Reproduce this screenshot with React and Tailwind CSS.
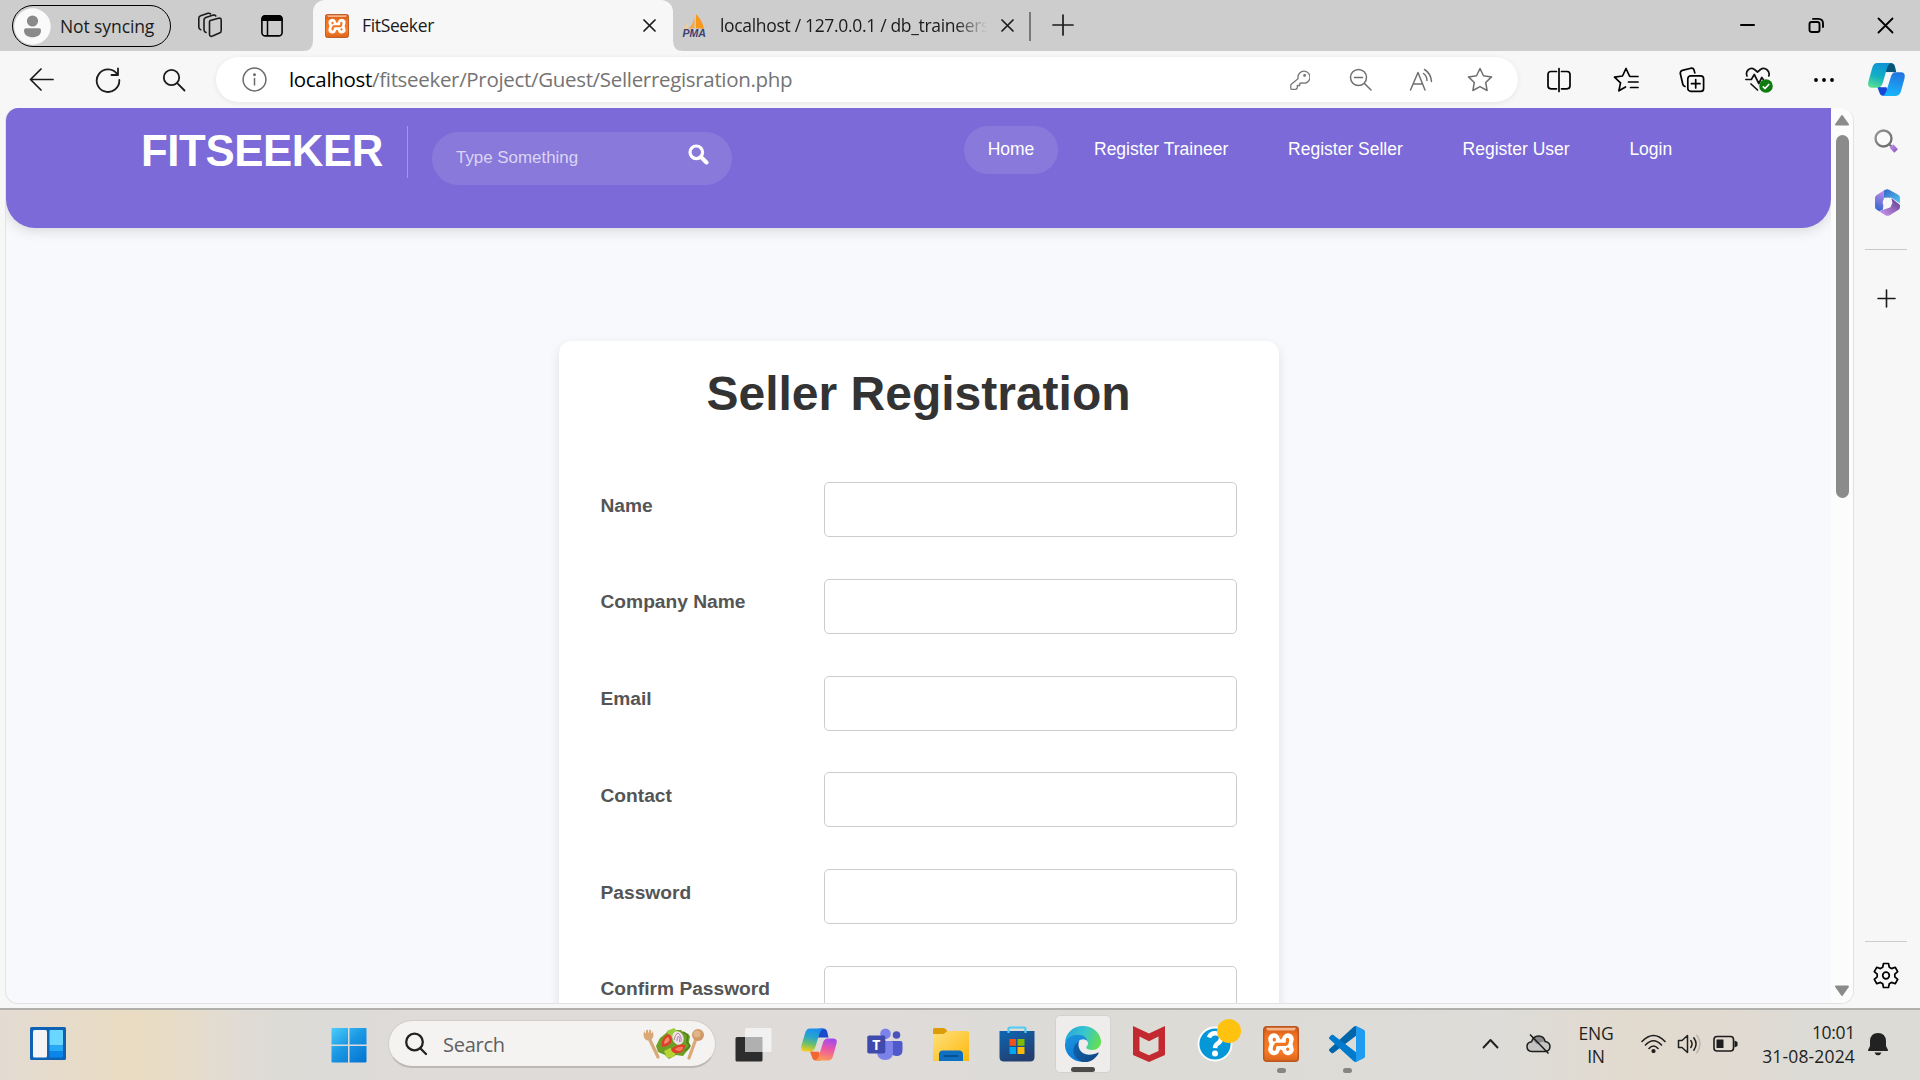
import React from "react";

const ui = "font-['Open_Sans','Noto_Sans',sans-serif]";
const arial = "font-['Liberation_Sans',Arial,sans-serif]";

function Svg({ w, h, vb, className = "", sw = 1.6, children }) {
  return (
    <svg
      width={w}
      height={h}
      viewBox={vb || `0 0 ${w} ${h}`}
      className={`block shrink-0 ${className}`}
      fill="none"
      stroke="currentColor"
      strokeWidth={sw}
      strokeLinecap="round"
      strokeLinejoin="round"
    >
      {children}
    </svg>
  );
}

function Xampp({ w, h, className = "" }) {
  return (
    <svg width={w} height={h} viewBox="0 0 36 36" preserveAspectRatio="none" className={`block shrink-0 ${className}`}>
      <defs>
        <linearGradient id="xa" x1="0" y1="0" x2="0" y2="1">
          <stop offset="0" stopColor="#c9581b" />
          <stop offset="0.25" stopColor="#f0711f" />
          <stop offset="0.7" stopColor="#fb7c24" />
          <stop offset="1" stopColor="#d9641c" />
        </linearGradient>
      </defs>
      <rect x="0.7" y="0.7" width="34.6" height="34.6" rx="3" fill="url(#xa)" stroke="#b9561f" strokeWidth="1.4" />
      <path d="M3 1.8h30l-1.5 2.6h-27z" fill="#f6b48b" />
      <g fill="none" strokeLinecap="round" strokeLinejoin="round">
        <path d="M11 13l1.500 5-1.500 5.500M25 13l-1.500 5 1.500 5.500M12 18.200h12" stroke="#fff" strokeWidth="11.500" />
        <path d="M11.300 13.300v.7M13 18.600q-1.700 1.500-1.700 4.600M13 18.400h9.500q2.200-.4 2-5M24.700 23v.3" stroke="#f27420" strokeWidth="3.200" />
        <path d="M17.800 9.500v3M17.800 24.500v3" stroke="#f97a24" strokeWidth="1.800" />
      </g>
    </svg>
  );
}

function Pma() {
  return (
    <svg width="25" height="24" viewBox="0 0 25 24" className="ml-[9px] block shrink-0">
      <path d="M14 0c4 4 7 9 8 15l-8-1z" fill="#f8981d" />
      <path d="M12.500 3v11l-6 1c3-3 5-7 6-12z" fill="#f9a73b" />
      <path d="M6 5v9l-4.500 1.500C4 12 5.500 9 6 5z" fill="#fbc98a" />
      <text x="0.500" y="23" textLength="23.500" lengthAdjust="spacingAndGlyphs" fontFamily="Liberation Sans" fontWeight="700" fontStyle="italic" fontSize="10" fill="#3e3f73">PMA</text>
    </svg>
  );
}

function Close({ className = "" }) {
  return (
    <Svg w={13} h={13} sw={1.7} className={className}>
      <path d="M1 1l11 11M12 1L1 12" />
    </Svg>
  );
}

function TabStrip() {
  return (
    <div className={`flex h-[51px] shrink-0 items-start bg-[#cdcdcd] text-[17.500px] text-[#1b1b1b] ${ui}`}>
      <div className="mt-[5px] ml-[12px] flex h-[42px] w-[159px] items-center rounded-full border-[1.500px] border-black">
        <svg width="37" height="37" viewBox="0 0 37 37" className="ml-px block shrink-0">
          <circle cx="18.500" cy="18.500" r="18.200" fill="#fafafa" />
          <circle cx="18.500" cy="13" r="5.600" fill="#8a8a8a" />
          <path d="M10 22.300q0-2 2-2h13q2 0 2 2c0 5-4 7-8.500 7s-8.500-2-8.500-7z" fill="#8a8a8a" />
        </svg>
        <span className="ml-[9px] tracking-[-0.1px] whitespace-nowrap">Not syncing</span>
      </div>
      <Svg w={26} h={26} className="mt-[12px] ml-[26px] text-[#1b1b1b]" sw={1.6}>
        <path d="M13.300 8.600L21.500 6.200q2.700-.5 2.700 2v10.300q0 2-1.800 2.600l-6.800 3q-3.100 1-3.100-1.800V9.800q0-.9.800-1.200z" />
        <path d="M9 20.500q-2-.6-2-2.700V8q0-2 1.800-2.600l7.500-2.300q1.700-.4 2.500.9" />
        <path d="M3.700 17.800q-1.900-.6-1.900-2.700V6.300q0-2 1.800-2.600L11 1.300q1.600-.4 2.500.6" />
      </Svg>
      <svg width="22" height="22" viewBox="0 0 22 22" className="mt-[15px] ml-[38px] block shrink-0">
        <rect x="0.900" y="0.900" width="20.200" height="20" rx="3.500" fill="none" stroke="#000" strokeWidth="1.600" />
        <path d="M.5 6V3.500Q.5.300 4 .300h14q3.500 0 3.500 3.200V6z" fill="#000" />
        <path d="M6.500 5v16" stroke="#000" strokeWidth="1.500" />
      </svg>
      <svg width="10" height="51" viewBox="0 0 10 51" className="ml-[20px] block shrink-0">
        <path d="M0 51q10 0 10-10v10z" fill="#f7f7f7" />
      </svg>
      <div className="flex h-[51px] w-[360px] shrink-0 items-center rounded-t-[12px] bg-[#f7f7f7]">
        <Xampp w={24} h={24} className="ml-[12px]" />
        <span className="ml-[13px] tracking-[-0.350px]">FitSeeker</span>
        <Close className="mr-[17px] ml-auto" />
      </div>
      <svg width="10" height="51" viewBox="0 0 10 51" className="block shrink-0">
        <path d="M10 51Q0 51 0 41v10z" fill="#f7f7f7" />
      </svg>
      <div className="flex h-[51px] w-[346px] shrink-0 items-center">
        <div className="-ml-[10px]"><Pma /></div>
        <span className="ml-[13px] w-[267px] overflow-hidden tracking-[-0.320px] whitespace-nowrap [mask-image:linear-gradient(to_right,black_235px,transparent_267px)]">
          localhost / 127.0.0.1 / db_traineers
        </span>
        <Close className="ml-[14px]" />
      </div>
      <div className="mt-[12px] h-[29px] w-[1.500px] bg-[#7a7a7a]" />
      <Svg w={22} h={22} className="mt-[14px] ml-[21px]" sw={1.700}>
        <path d="M11 1v20M1 11h20" />
      </Svg>
      <Svg w={17} h={16} className="mt-[17px] ml-auto text-black" sw={2}>
        <path d="M2 8h13" />
      </Svg>
      <Svg w={17} h={17} className="mt-[17px] ml-[52px] text-black" sw={1.900}>
        <rect x="1.500" y="5" width="10" height="10" rx="2" />
        <path d="M5 1.900h5.500Q15 2 15 6.500V10" />
      </Svg>
      <Svg w={17} h={17} className="mt-[17px] mr-[26px] ml-[52px] text-black" sw={1.800}>
        <path d="M1.500 1.500l14 14M15.500 1.500l-14 14" />
      </Svg>
    </div>
  );
}

function CopilotBlue() {
  return (
    <svg width="37" height="33" viewBox="0 0 36 32" className="block shrink-0">
      <defs>
        <linearGradient id="cbl" x1="0.600" y1="0" x2="0.300" y2="1">
          <stop offset="0" stopColor="#0f93d6" />
          <stop offset="0.550" stopColor="#12b0c4" />
          <stop offset="1" stopColor="#58dd93" />
        </linearGradient>
        <linearGradient id="cbr" x1="0.600" y1="0" x2="0.400" y2="1">
          <stop offset="0" stopColor="#2374e0" />
          <stop offset="1" stopColor="#17b5fb" />
        </linearGradient>
      </defs>
      <path d="M18 0h4q3.500 0 4.300 3.500L27.500 9H17z" fill="#0a5577" />
      <path d="M9 23h9l2 9h-5q-3 0-4-3.500z" fill="#1747d6" />
      <path d="M17.500 9H24L19 23.500h-7z" fill="#f7f7f7" />
      <path d="M9 0h13.500q-3 1-4.300 6L14.500 19q-1.500 5-5.500 5H4q-5 0-3.600-6L4 5Q5.300 0 9 0z" fill="url(#cbl)" />
      <path d="M27 32H14q3-1 4.300-6l3.900-12.500q1.200-4.500 4.800-4.500H32q4.800 0 3.500 6L32.200 27Q31 32 27 32z" fill="url(#cbr)" />
    </svg>
  );
}

function CopilotColor() {
  return (
    <svg width="36" height="33" viewBox="0 0 36 32" className="block shrink-0">
      <defs>
        <linearGradient id="ccl" x1="0.600" y1="0" x2="0.400" y2="1">
          <stop offset="0" stopColor="#1b8df2" />
          <stop offset="0.400" stopColor="#2aa6c8" />
          <stop offset="0.700" stopColor="#6fc06a" />
          <stop offset="1" stopColor="#f2cd1e" />
        </linearGradient>
        <linearGradient id="ccr" x1="0.600" y1="0" x2="0.400" y2="1">
          <stop offset="0" stopColor="#a04af0" />
          <stop offset="0.500" stopColor="#ee5aa0" />
          <stop offset="1" stopColor="#fb9a55" />
        </linearGradient>
      </defs>
      <path d="M18 0h4q3.500 0 4.300 3.500L27.500 9H17z" fill="#1a49cc" />
      <path d="M9 23h9l2 9h-5q-3 0-4-3.500z" fill="#f4662f" />
      <path d="M17.500 9.500H24L19 23h-7z" fill="#dedbd9" />
      <path d="M9 0h13.500q-3 1-4.300 6L14.500 18q-1.500 5-5.500 5H4q-5 0-3.600-6L4 5Q5.300 0 9 0z" fill="url(#ccl)" />
      <path d="M27 32H14q3-1 4.300-6l3.600-11.500q1.200-4.500 4.800-4.500H32q4.800 0 3.500 5L32.200 27Q31 32 27 32z" fill="url(#ccr)" />
    </svg>
  );
}

function Toolbar() {
  return (
    <div className={`flex h-[57px] shrink-0 items-center bg-[#f7f7f7] text-[#1b1b1b] ${ui}`}>
      <Svg w={25} h={23} className="ml-[29px]" sw={1.700}>
        <path d="M24 11.500H1.500M12 1L1.500 11.500 12 22" />
      </Svg>
      <Svg w={26} h={26} className="ml-[41px]" sw={1.800}>
        <path d="M22.500 7.500A11.300 11.300 0 1 0 24.300 13M23 1.500v6.500h-6.500" />
      </Svg>
      <Svg w={24} h={24} className="ml-[41px]" sw={1.800}>
        <circle cx="9.500" cy="9.500" r="7.700" />
        <path d="M15.200 15.200L22.500 22.500" />
      </Svg>
      <div className="ml-[30px] flex h-[45px] w-[1302px] items-center rounded-full bg-white text-[#747474] shadow-[0_1px_5px_rgba(0,0,0,0.08)]">
        <Svg w={25} h={25} className="ml-[26px] text-[#6b6b6b]" sw={1.500}>
          <circle cx="12.500" cy="12.500" r="11.400" />
          <path d="M12.500 11.500v6.500" />
          <circle cx="12.500" cy="7.700" r="0.700" fill="currentColor" />
        </Svg>
        <span className="ml-[22px] text-[20.500px] tracking-[-0.320px] whitespace-nowrap">
          <span className="text-black">localhost</span>/fitseeker/Project/Guest/Sellerregisration.php
        </span>
        <Svg w={20} h={20} className="ml-auto text-[#777]" sw={1.300}>
          <path d="M8 7.500A6 6 0 1 1 12.600 13L9.800 13.200v2.300H7.300V18l-1.200 1.300H1.500q-.7 0-.7-.8v-3.200q0-.6.500-1L8 8.800z" />
          <circle cx="14.600" cy="5.400" r="0.800" fill="currentColor" />
        </Svg>
        <Svg w={23} h={23} className="ml-[39px] text-[#6f6f6f]" sw={1.500}>
          <circle cx="9.500" cy="9.500" r="8" />
          <path d="M15.500 15.500L22 22M5.500 9.500h8" />
        </Svg>
        <Svg w={24} h={24} className="ml-[37px] text-[#6f6f6f]" sw={1.500}>
          <path d="M1.500 22L9 4.500 16 22M4.200 16h9.500M14.500 5.500q3.500 2.500 3.500 7M15.500 1.500Q22 5.500 22.500 13.500" />
        </Svg>
        <Svg w={26} h={26} className="mr-[25px] ml-[34px] text-[#6f6f6f]" sw={1.500}>
          <path d="M13 1.500l3.500 7.300 8 1.100-5.800 5.600 1.400 8-7.100-3.800-7.100 3.800 1.400-8L1.500 9.900l8-1.100z" />
        </Svg>
      </div>
      <Svg w={24} h={26} className="ml-[29px] text-black" sw={1.700}>
        <path d="M9.500 4.500H4Q1 4.500 1 7.500v11.300q0 3 3 3h5.500M14.500 4.500H20q3 0 3 3v11.300q0 3-3 3h-5.500M12 1.500v23" />
      </Svg>
      <Svg w={26} h={26} className="ml-[42px] text-black" sw={1.700}>
        <path d="M16.500 9L13 1.500 9.500 9 1.500 10.200l6 5.600-1.600 8L12.500 20M17.500 9.500H25M15.500 15H25M17.500 20.500H25" />
      </Svg>
      <Svg w={26} h={26} className="ml-[40px] text-black" sw={1.700}>
        <path d="M6 19.500q-1.800-.6-2.200-2.300L1.300 6.500Q1 4 3.300 3.400L12 1.200q2.300-.3 3 1.700l.8 3" />
        <rect x="8.800" y="8.800" width="15.800" height="15.600" rx="3" />
        <path d="M16.700 12.500v8.500M12.500 16.700H21" />
      </Svg>
      <svg width="28" height="26" viewBox="0 0 28 26" className="ml-[40px] block shrink-0">
        <path d="M2 9C0 4 5-.5 9.500 2.500L12.500 5l3-2.500C20-.5 25.500 4 23.800 9M.800 12.500h5.500l3-5 4.500 9 3-6 1.500 2M6 17l6.500 6" fill="none" stroke="#111" strokeWidth="1.700" strokeLinecap="round" strokeLinejoin="round" />
        <circle cx="21" cy="19" r="6.800" fill="#107c10" />
        <path d="M17.800 19.300l2.200 2.200 4.200-4.500" fill="none" stroke="#fff" strokeWidth="1.700" />
      </svg>
      <svg width="22" height="6" viewBox="0 0 22 6" className="ml-[40px] block shrink-0">
        <circle cx="3" cy="3" r="1.900" /><circle cx="11" cy="3" r="1.900" /><circle cx="19" cy="3" r="1.900" />
      </svg>
      <div className="ml-[33px]"><CopilotBlue /></div>
    </div>
  );
}

const links = ["Register Traineer", "Register Seller", "Register User", "Login"];

function SiteHeader() {
  return (
    <header className={`flex h-[120px] shrink-0 items-start rounded-b-[29px] bg-[#7b6ad7] text-white shadow-[0_2px_14px_rgba(0,0,0,0.15)] ${arial}`}>
      <div className="mt-[18px] ml-[135px] h-[52px] w-[267px] border-r border-white/30 text-[43.750px] leading-[50px] font-bold tracking-[-0.400px]">FITSEEKER</div>
      <div className="mt-[24px] ml-[24px] flex h-[53px] w-[300px] items-center rounded-full bg-white/10">
        <span className="mb-[2px] ml-[24px] text-[16.900px] text-white/70">Type Something</span>
        <svg width="21" height="21" viewBox="0 0 21 21" className="mr-[23px] mb-[8px] ml-auto block">
          <circle cx="8.300" cy="8.300" r="6.300" fill="none" stroke="#fff" strokeWidth="3.200" />
          <path d="M13 13l5.500 5.500" stroke="#fff" strokeWidth="4" strokeLinecap="round" />
        </svg>
      </div>
      <nav className="mt-[18px] ml-[232px] flex h-[48px] items-center text-[17.500px] whitespace-nowrap">
        <div className="flex h-[48px] w-[94px] items-center justify-center rounded-full bg-white/10 pb-[2px]">Home</div>
        <div className="ml-[36px] flex gap-[59.800px] pb-[2px]">
          {links.map((l) => <span key={l}>{l}</span>)}
        </div>
      </nav>
    </header>
  );
}

const fields = ["Name", "Company Name", "Email", "Contact", "Password", "Confirm Password"];

function Page() {
  return (
    <div className="flex h-[896px] w-[1849px] overflow-hidden rounded-[13px] border border-t-0 border-[#e2e2e2] bg-[#f8f9fd]">
      <main className={`flex w-[1825px] flex-col items-center ${arial}`}>
        <div className="w-full"><SiteHeader /></div>
        <section className="mt-[113px] flex h-[900px] w-[720px] shrink-0 flex-col rounded-[13px] bg-white px-[42px] shadow-[0_4px_12px_rgba(0,0,0,0.1)]">
          <h1 className="mt-[25px] text-center text-[48px] leading-[56px] font-bold text-[#333]">Seller Registration</h1>
          <div className="mt-[60px] flex flex-col gap-[41.800px]">
            {fields.map((f) => (
              <div key={f} className="flex h-[55px] shrink-0 justify-between">
                <span className="mt-[12.500px] text-[19.200px] leading-[22px] font-bold whitespace-nowrap text-[#555]">{f}</span>
                <div className="h-[55px] w-[413px] rounded-[5px] border border-[#ccc] bg-white" />
              </div>
            ))}
          </div>
        </section>
      </main>
      <div className="flex h-full flex-1 flex-col items-center bg-[#fcfcfc]">
        <svg width="16" height="12" viewBox="0 0 16 12" className="mt-[6px] block"><path d="M8 2L14 10.500H2z" fill="#8b8b8b" stroke="#8b8b8b" strokeWidth="2" strokeLinejoin="round" /></svg>
        <div className="mt-[9px] h-[363px] w-[13px] rounded-full bg-[#8b8b8b]" />
        <svg width="16" height="12" viewBox="0 0 16 12" className="mt-auto mb-[6px] block"><path d="M8 10L14 1.500H2z" fill="#8b8b8b" stroke="#8b8b8b" strokeWidth="2" strokeLinejoin="round" /></svg>
      </div>
    </div>
  );
}

function Sidebar() {
  return (
    <aside className="flex w-[65px] flex-col items-center pr-px">
      <svg width="25" height="25" viewBox="0 0 25 25" className="mt-[21px] block">
        <defs>
          <linearGradient id="mg" x1="0" y1="0" x2="1" y2="1"><stop offset="0" stopColor="#9a9a9a" /><stop offset="1" stopColor="#666" /></linearGradient>
          <linearGradient id="mh" gradientUnits="userSpaceOnUse" x1="16" y1="16" x2="24" y2="24"><stop offset="0" stopColor="#c78ff0" /><stop offset="1" stopColor="#7d52ab" /></linearGradient>
        </defs>
        <circle cx="9.500" cy="9.500" r="8" fill="#fafafa" stroke="url(#mg)" strokeWidth="2.300" />
        <path d="M14.500 14.500l3 3" stroke="#777" strokeWidth="2.200" />
        <path d="M17.500 17l4.600 5" stroke="url(#mh)" strokeWidth="5" strokeLinecap="butt" />
      </svg>
      <svg width="25" height="27" viewBox="0 0 24 26" className="mt-[35px] ml-[2px] block">
        <defs>
          <linearGradient id="ml" x1="0.500" y1="0" x2="0.300" y2="1"><stop offset="0" stopColor="#b88ae8" /><stop offset="1" stopColor="#2f66cf" /></linearGradient>
          <linearGradient id="mt" x1="0" y1="0" x2="1" y2="1"><stop offset="0" stopColor="#3567c4" /><stop offset="1" stopColor="#50c8f5" /></linearGradient>
          <linearGradient id="mb" x1="1" y1="0" x2="0" y2="1"><stop offset="0" stopColor="#5b3b8a" /><stop offset="1" stopColor="#d19af5" /></linearGradient>
        </defs>
        <path d="M8.500 1.500v11L7.500 20 4 21.500 1.500 19.800Q0 19 0 17V8.500Q0 7 1.300 6z" fill="url(#ml)" />
        <path d="M8.500 1.500L10.500.500Q12 0 13.500.700L22.300 5.600Q24 6.600 24 8.500V14l-8-5.500H8.500z" fill="url(#mt)" />
        <path d="M16 9l8 6.500v2q0 1.600-1.300 2.500l-9 5.400q-1.700.8-3.400 0L4 21.500l11-4z" fill="url(#mb)" />
        <circle cx="12" cy="13" r="4.600" fill="#f7f7f7" />
      </svg>
      <div className="mt-[33px] h-px w-[42px] bg-[#c9c9c9]" />
      <Svg w={19} h={19} className="mt-[39px] text-[#1b1b1b]" sw={1.600}><path d="M9.500 1v17M1 9.500h17" /></Svg>
      <div className="mt-auto h-px w-[42px] bg-[#cdcdcd]" />
      <Svg w={26} h={27} vb="0 0 26 27" className="mt-[20px] mb-[19px] text-black" sw={1.700}>
        <path d="M10.500 1.500h5l.8 3.800 2.200 1.300 3.700-1.300 2.500 4.300-2.900 2.600v2.600l2.900 2.600-2.500 4.300-3.700-1.300-2.200 1.300-.8 3.800h-5l-.8-3.800-2.200-1.300-3.700 1.300-2.500-4.300 2.900-2.600v-2.600L1.300 9.600l2.500-4.300 3.700 1.300 2.200-1.300z" />
        <circle cx="13" cy="13.500" r="3.300" />
      </Svg>
    </aside>
  );
}

function Salad() {
  return (
    <svg width="62" height="32" viewBox="0 0 62 32" className="block shrink-0">
      <path d="M5 8l10 21" stroke="#d9a876" strokeWidth="3.200" strokeLinecap="round" />
      <ellipse cx="5.500" cy="7" rx="5" ry="5.500" fill="#d9a876" />
      <path d="M2.500 1v4M5.500.500v4M8.500 1v4" stroke="#f3f2f0" strokeWidth="1" />
      <path d="M54 8L46 30" stroke="#dba876" strokeWidth="3.200" strokeLinecap="round" />
      <circle cx="55" cy="7" r="6" fill="#cf9a68" />
      <circle cx="54" cy="6" r="3.500" fill="#e0b587" />
      <path d="M13 18l4-8 5-4 4-4 6 0 6 0 4 4 5 2-1 6 1 6-3 3-4 5-7-1-7 4-4-4-7-3z" fill="#6e9e24" />
      <path d="M21 23l6-3 6 3-2 6-7 1z" fill="#b5d334" />
      <path d="M24 3l7-3 4 4-4 6-6-1z" fill="#9ccc3c" />
      <path d="M19 19q-2-9 6-13 4 1 4 6-1 6-10 7z" fill="#de3f2b" />
      <path d="M21 16q0-5 4-7 2 1 1 4-1 2-5 3z" fill="#f58c68" />
      <ellipse cx="35" cy="10" rx="5.500" ry="7" transform="rotate(-20 35 10)" fill="#efe1ea" />
      <path d="M31 12q1-6 4-7 4 3 3 9M34 13q0-4 1.500-5 2 2 1 6" fill="none" stroke="#b484a6" strokeWidth="1" />
      <path d="M28 21q8-6 14-4 0 7-7 8-6 1-7-4z" fill="#de3f2b" />
      <path d="M32 21q4-3 8-2 0 3-3 4-4 0-5-2z" fill="#f47c5c" />
      <path d="M40 4l5 3-1 7 3 4-5 5" fill="none" stroke="#4e7f1b" strokeWidth="1.500" />
    </svg>
  );
}

function Teams() {
  return (
    <svg width="36" height="33" viewBox="0 0 36 33" className="block shrink-0">
      <circle cx="29.500" cy="7" r="3.800" fill="#4b53bc" />
      <path d="M24 13h9.500q2 0 2 2v7q0 6-6 6-4 0-5.500-3z" fill="#5059c9" />
      <circle cx="18.500" cy="5.800" r="5.300" fill="#7b83eb" />
      <path d="M10 13h14q2 0 2 2v9q0 8-8 8-7 0-8-7z" fill="#7b83eb" />
      <rect x="0.300" y="7.500" width="18" height="18" rx="1.700" fill="#4049ac" />
      <text x="9.300" y="21.500" textAnchor="middle" fontFamily="Open Sans" fontWeight="700" fontSize="14" fill="#fff">T</text>
    </svg>
  );
}

function Explorer() {
  return (
    <svg width="36" height="33" viewBox="0 0 36 33" className="block shrink-0">
      <defs><linearGradient id="ex" x1="0" y1="0" x2="1" y2="1"><stop offset="0" stopColor="#ffe17c" /><stop offset="1" stopColor="#fcb80c" /></linearGradient></defs>
      <path d="M0 8V1.500Q0 0 1.500 0H10q1.500 0 2.500 1l2 2-4 4.500z" fill="#dc9c08" />
      <path d="M0 6h10q1 0 2-1l1.500-1.200q1-.8 2.200-.8H34.500Q36 3 36 4.500V33H0z" fill="url(#ex)" />
      <path d="M6 33v-6.500q0-4 4-4h16q4 0 4 4V33z" fill="#0f6fc0" />
      <path d="M11.500 28h13" stroke="#0b4f90" strokeWidth="1.800" strokeLinecap="round" />
    </svg>
  );
}

function Store() {
  return (
    <svg width="36" height="36" viewBox="0 0 36 36" className="block shrink-0">
      <defs><linearGradient id="st" x1="0" y1="0" x2="0.500" y2="1"><stop offset="0" stopColor="#0d66b4" /><stop offset="1" stopColor="#233f70" /></linearGradient></defs>
      <path d="M.500 5h35v26q0 4.500-4.500 4.500H5Q.500 35.500.500 31z" fill="url(#st)" />
      <path d="M9.500 7V3Q9.500 1.500 11 1.500h14q1.500 0 1.500 1.500v4" fill="none" stroke="#4fcbf5" strokeWidth="2.200" />
      <path d="M10.500 13H17v6.800h-6.500z" fill="#f1511b" />
      <path d="M18.500 13h7v6.800h-7z" fill="#80bb03" />
      <path d="M10.500 21H17v7h-6.500z" fill="#05a6f0" />
      <path d="M18.500 21h7v7h-7z" fill="#fbba09" />
    </svg>
  );
}

function Edge() {
  return (
    <svg width="36" height="36" viewBox="0 0 36 36" className="block shrink-0">
      <defs>
        <linearGradient id="e1" x1="0" y1="0.300" x2="1" y2="0.600"><stop offset="0" stopColor="#27a6d8" /><stop offset="0.500" stopColor="#38c6cf" /><stop offset="1" stopColor="#63e04e" /></linearGradient>
        <linearGradient id="e2" x1="0.200" y1="0" x2="0.500" y2="1"><stop offset="0" stopColor="#1c93dc" /><stop offset="1" stopColor="#0b78d6" /></linearGradient>
        <linearGradient id="e3" x1="0" y1="0" x2="1" y2="0.600"><stop offset="0" stopColor="#1263b0" /><stop offset="1" stopColor="#0f4a86" /></linearGradient>
      </defs>
      <path d="M0 18C0 7 8 0 18 0s18 7.500 18 15.500c0 5.500-4 8.500-8.800 8.500-3.700 0-6-1.200-6-2.500 0-1 1.800-1.500 1.800-4.300 0-4-4-6.700-9-6.700C6.500 10.500 0 14 0 18z" fill="url(#e1)" />
      <path d="M0 18.500C.500 12 7 8.700 13 8.700c5.500 0 9.500 3.300 10 7.800-.8-2-2.600-3.200-5-3.200-4 0-6.500 4-6 9 .5 6.500 5 12 11.500 12.700C21.500 36 20 36 18 36 8 36-.5 28 0 18.500z" fill="url(#e2)" />
      <path d="M14.300 15c-2.500 5 .7 13.700 9.700 13.700 4 0 7-1.200 8.500-2 .8-.4 1.400.300.900 1C30.500 32.500 26 36 20 36c-6.500 0-12.500-6-11.500-13 .5-3.700 3-6.500 5.800-8z" fill="url(#e3)" />
    </svg>
  );
}

function Vscode() {
  return (
    <svg width="36" height="36" viewBox="0 0 100 100" className="block shrink-0">
      <path d="M96.460 10.800L75.860.880C73.470-.270 70.620.210 68.750 2.080L1.300 63.580c-1.810 1.650-1.810 4.510 0 6.170l5.510 5c1.490 1.350 3.720 1.450 5.320.240L93.360 13.370C96.090 11.300 100 13.250 100 16.670v-.240c0-2.400-1.380-4.590-3.540-5.630z" fill="#0065a9" />
      <path d="M96.460 89.200l-20.600 9.920c-2.390 1.150-5.240.670-7.110-1.200L1.300 36.420c-1.810-1.650-1.810-4.510 0-6.170l5.510-5c1.490-1.350 3.720-1.450 5.320-.240l81.230 61.620C96.090 88.700 100 86.750 100 83.330v.240c0 2.400-1.380 4.590-3.540 5.630z" fill="#007acc" />
      <path d="M75.860 99.130c-2.390 1.150-5.240.660-7.110-1.210 2.310 2.300 6.250.670 6.250-2.590V4.670C75 1.410 71.060-.220 68.750 2.080 70.620.210 73.470-.270 75.860.870l20.600 9.910c2.160 1.040 3.540 3.230 3.540 5.630v67.180c0 2.400-1.380 4.590-3.540 5.630z" fill="#1f9cf0" />
    </svg>
  );
}

function TaskApp({ children, dot = false }) {
  return (
    <div className="flex h-[57px] w-[66px] flex-col items-center">
      <div className="flex h-[52px] items-center pt-[4px]">{children}</div>
      {dot && <div className="h-[5px] w-[9px] rounded-full bg-[#858583]" />}
    </div>
  );
}

function Taskbar() {
  return (
    <footer className={`flex h-[72px] shrink-0 items-start border-t-2 border-[#b2b0ad] bg-[linear-gradient(90deg,#e3dbd3_0px,#e7dbc9_70px,#eadcc2_130px,#e8dcc6_170px,#e0dbd4_240px,#dcdbd7_300px,#dedbd8_400px,#dedbd9_900px,#dcdbd6_1150px,#dddcd8_1500px,#e2dace_1640px,#e1dad1_1720px,#dcdbd5_1810px,#dcdbd6_1920px)] text-[#1f1f1f] ${ui}`}>
      <svg width="36" height="34" viewBox="0 0 36 34" className="mt-[17px] ml-[30px] block shrink-0">
        <rect width="36" height="33" rx="1.500" fill="#0d62b3" />
        <rect x="3" y="3" width="14" height="27.500" rx="1.500" fill="#f5f5f5" />
        <rect x="19.500" y="3" width="13.500" height="15.500" rx="1" fill="#69d7ff" />
        <rect x="19.500" y="18.500" width="13.500" height="6" fill="#26a9f7" />
        <rect x="19.500" y="24.500" width="13.500" height="6" rx="1" fill="#0a85ea" />
      </svg>
      <svg width="36" height="36" viewBox="0 0 36 36" className="mt-[17px] ml-[265px] block shrink-0">
        <defs><linearGradient id="wn" gradientUnits="userSpaceOnUse" x1="0" y1="0" x2="30" y2="36"><stop offset="0" stopColor="#4cd0fb" /><stop offset="0.500" stopColor="#1b98e4" /><stop offset="1" stopColor="#0677d3" /></linearGradient></defs>
        <path d="M1.500 1H17v16.500H.500V2q0-1 1-1zM18.500 1H34.500q1 0 1 1v15.500h-17zM.500 19H17v16.500H1.500q-1 0-1-1zM18.500 19h17v15.500q0 1-1 1h-16z" fill="url(#wn)" />
      </svg>
      <div className="mt-[10px] ml-[21px] flex h-[48px] w-[328px] items-center rounded-full border border-b-2 border-[#d0ceca] border-b-[#bbb9b5] bg-[#f4f3f1]">
        <Svg w={24} h={24} className="ml-[15px] text-[#222]" sw={2.300}>
          <circle cx="10.500" cy="10" r="8.300" />
          <path d="M16.500 16.500L22 22" />
        </Svg>
        <span className="mt-[2px] ml-[15px] text-[20px] tracking-[-0.250px] text-[#5f5f5f]">Search</span>
        <div className="mr-[10px] ml-auto"><Salad /></div>
      </div>
      <div className="mt-[6px] ml-[4px] flex">
        <TaskApp>
          <svg width="37" height="36" viewBox="0 0 37 36" className="block">
            <rect x="0.500" y="11" width="27" height="24.500" rx="1.500" fill="#2d2d2d" />
            <rect x="10" y="2" width="26.500" height="24" rx="1.500" fill="#f1f1f1" />
            <path d="M10 11h17.500v15H11.500q-1.500 0-1.500-1.500z" fill="#b0b0b0" />
          </svg>
        </TaskApp>
        <TaskApp><CopilotColor /></TaskApp>
        <TaskApp><Teams /></TaskApp>
        <TaskApp><Explorer /></TaskApp>
        <TaskApp><Store /></TaskApp>
        <div className="mx-[5px] -mt-[1px] flex h-[58px] w-[56px] flex-col items-center rounded-[5px] border border-[#d4d2cf] bg-[#eeedeb]">
          <div className="flex h-[52px] items-center pt-[5px]"><Edge /></div>
          <div className="h-[5px] w-[24px] rounded-full bg-[#4c4b4a]" />
        </div>
        <TaskApp>
          <svg width="32" height="36" viewBox="0 0 32 36" className="block">
            <path d="M0 0l16 7.500L32 0v29l-16 7L0 29zM6.500 10.500v14.500l9.500 4.200 9.500-4.200V10.500L16 15.200z" fill="#c32a2f" fillRule="evenodd" />
          </svg>
        </TaskApp>
        <TaskApp>
          <div className="relative">
            <svg width="36" height="36" viewBox="0 0 36 36" className="block">
              <circle cx="18" cy="18" r="16.500" fill="#0597d7" stroke="#fff" strokeWidth="1.800" />
              <path d="M12 11.500q1.500-4.500 6.500-4.300 6 .5 5.500 5.500-.3 3-3.500 5-2.300 1.500-2.500 4.500" fill="none" stroke="#fff" strokeWidth="4.500" />
              <circle cx="18" cy="27.500" r="3" fill="#fff" />
            </svg>
            <div className="absolute -top-[7px] left-[20px] h-[24px] w-[24px] rounded-full bg-[#ffc20e]" />
          </div>
        </TaskApp>
        <TaskApp dot><Xampp w={36} h={36} /></TaskApp>
        <TaskApp dot><Vscode /></TaskApp>
      </div>
      <Svg w={17} h={11} className="mt-[28px] ml-auto" sw={1.900}><path d="M1.500 9.500l7-7.500 7 7.500" /></Svg>
      <svg width="25" height="22" viewBox="0 0 25 22" className="mt-[23px] ml-[27px] block shrink-0">
        <path d="M6 18.500q-5-.3-5-5 0-4 4.500-4.700Q7.500 3 12.500 3q5.500 0 6.700 5.500 4.800.7 4.800 5.200-.3 4.500-5 4.800z" fill="#c4c4c2" />
        <path d="M7 7q2-4 5.500-4 5.500 0 6.700 5.500-5 0-8 3z" fill="#8a8a8a" />
        <path d="M6 18.500q-5-.3-5-5 0-4 4.500-4.700Q7.500 3 12.500 3q5.500 0 6.700 5.500 4.800.7 4.800 5.200-.3 4.500-5 4.800zM4 1.500L22.500 20.500" fill="none" stroke="#1c1c1c" strokeWidth="1.500" />
      </svg>
      <div className="mt-[12px] ml-[22px] flex w-[46px] flex-col text-center text-[17.500px] leading-[23px] tracking-[-0.200px]">
        <span>ENG</span><span>IN</span>
      </div>
      <Svg w={25} h={19} className="mt-[24px] ml-[22px]" sw={1.600}>
        <path d="M1 7.500q11.500-12 23 0M4.500 11q8-8.500 16 0M8 14.500q4.500-5 9 0" />
        <circle cx="12.500" cy="17" r="1.300" fill="currentColor" />
      </Svg>
      <Svg w={26} h={22} className="mt-[23px] ml-[11px]" sw={1.500}>
        <path d="M1.500 7.500H5L10.500 2.500v17L5 14.500H1.500z" />
        <path d="M13.800 7.500q2.500 3.500 0 7M16.800 4.800q4.500 6.200 0 12.400" />
        <path d="M19.800 2.300q6.500 8.700 0 17.400" stroke="#bdb6ad" />
      </Svg>
      <svg width="25" height="18" viewBox="0 0 25 18" className="mt-[25px] ml-[10px] block shrink-0">
        <rect x="1" y="1.500" width="19.500" height="14.500" rx="3" fill="none" stroke="#1c1c1c" strokeWidth="1.600" />
        <rect x="3.500" y="4.500" width="7" height="8.500" rx="0.500" fill="#1c1c1c" />
        <path d="M21.500 5.500l3 1.500v4l-3 1.500z" fill="#1c1c1c" />
      </svg>
      <div className="mt-[10px] ml-[17px] flex w-[100px] flex-col text-right text-[17.500px] leading-[24px] tracking-[0.150px] whitespace-nowrap">
        <span className="tracking-[-0.300px]">10:01</span><span>31-08-2024</span>
      </div>
      <svg width="22" height="24" viewBox="0 0 22 24" className="mt-[22px] mr-[31px] ml-[12px] block shrink-0">
        <path d="M11 1q7.500 0 8 8v5l2 4q.3 1-.8 1H1.800Q.700 19 1 18l2-4V9q.5-8 8-8z" fill="#222" />
        <path d="M7.500 20.500h7q-1 2.800-3.500 2.800t-3.500-2.800z" fill="#222" />
      </svg>
    </footer>
  );
}

export default function App() {
  return (
    <div className="flex h-[1080px] w-[1920px] flex-col overflow-hidden bg-[#f7f7f7]">
      <TabStrip />
      <Toolbar />
      <div className="flex h-[900px] shrink-0 pl-[5px]">
        <Page />
        <Sidebar />
      </div>
      <Taskbar />
    </div>
  );
}
